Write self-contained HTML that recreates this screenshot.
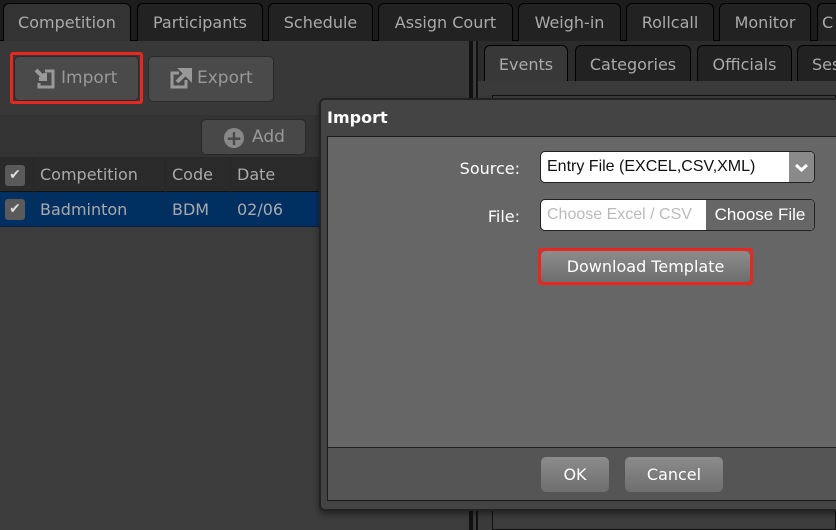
<!DOCTYPE html>
<html><head><style>
*{box-sizing:border-box;margin:0;padding:0}
body{width:836px;height:530px;overflow:hidden;background:#3c3c3c;font-family:"DejaVu Sans","Liberation Sans",sans-serif;position:relative}
.a{position:absolute}
.tab{position:absolute;top:3px;height:38px;border:1px solid #000;border-bottom:none;border-radius:6px 6px 0 0;background:#222;color:#aaa;font-size:16px;text-align:center;line-height:38px}
.stab{position:absolute;top:45px;height:36px;border:1px solid #000;border-bottom:none;border-radius:6px 6px 0 0;background:#222;color:#aaa;font-size:16px;text-align:center;line-height:38px}
.btn{position:absolute;border:1px solid #2a2a2a;border-radius:5px;background:#4a4a4a;color:#999;font-size:17px;line-height:43px}
.th{position:absolute;top:157px;height:35px;line-height:36px;color:#aaa;font-size:16px;padding-left:6px;border-right:1px dotted #222}
.td{position:absolute;top:192px;height:34px;line-height:36px;color:#aaa;font-size:16px;padding-left:6px;border-right:1px dotted #1a2a40}
.chk{position:absolute;left:5px;width:20px;height:21px;background:#5a5a5a;border-radius:3px;color:#ddd;font-size:14px;text-align:center;line-height:21px}
.dbtn{position:absolute;border-radius:5px;background:linear-gradient(#8c8c8c,#6e6e6e);color:#fff;font-size:16px;text-align:center}
.lbl{position:absolute;text-align:right;color:#fff;font-size:16px}
</style></head><body>
<div class="a" style="left:0;top:0;width:836px;height:41px;background:#1c1c1c;border-bottom:1px solid #000"></div>
<div class="tab" style="left:3px;width:128px;background:#333">Competition</div>
<div class="tab" style="left:137px;width:126px">Participants</div>
<div class="tab" style="left:268px;width:105px">Schedule</div>
<div class="tab" style="left:378px;width:135px">Assign Court</div>
<div class="tab" style="left:518px;width:103px">Weigh-in</div>
<div class="tab" style="left:626px;width:88px">Rollcall</div>
<div class="tab" style="left:719px;width:92px">Monitor</div>
<div class="tab" style="left:817px;width:40px;text-align:left;padding-left:4px">C</div>

<div class="a" style="left:0;top:41px;width:469px;height:74px;background:#383838"></div>
<div class="btn" style="left:14px;top:56px;width:125px;height:45px;padding-left:46px">Import</div>
<svg class="a" style="left:33px;top:67px" width="24" height="22" viewBox="0 0 24 22"><path d="M3 3 L12 12 M6 12 H12 V6" stroke="#999" stroke-width="4" fill="none"/><path d="M12 4 H20 V20 H6 V16" stroke="#999" stroke-width="3" fill="none"/></svg>
<div class="a" style="left:10px;top:52px;width:133px;height:52px;border:3px solid #e8281e;border-radius:3px"></div>
<div class="btn" style="left:148px;top:56px;width:126px;height:46px;padding-left:48px">Export</div>
<svg class="a" style="left:169px;top:67px" width="24" height="22" viewBox="0 0 24 22"><path d="M10 6 H3 V20 H17 V13" stroke="#999" stroke-width="3" fill="none"/><path d="M8 15 L18 5 M13 3 H21 V11 Z" stroke="#999" stroke-width="4" fill="#999"/></svg>
<div class="a" style="left:0;top:115px;width:469px;height:42px;background:#333"></div>
<div class="btn" style="left:201px;top:119px;width:105px;height:36px;line-height:35px;padding-left:50px;background:#484848">Add</div>
<div class="a" style="left:224px;top:128px;width:20px;height:20px;border-radius:50%;background:#888;color:#484848;font-weight:bold;font-size:20px;line-height:20px;text-align:center">+</div>
<div class="a" style="left:0;top:157px;width:469px;height:35px;background:#2a2a2a;border-bottom:1px solid #111"></div>
<div class="th" style="left:0;width:34px"></div><div class="chk" style="top:165px">✔</div>
<div class="th" style="left:34px;width:132px">Competition</div>
<div class="th" style="left:166px;width:65px">Code</div>
<div class="th" style="left:231px;width:100px;border:none">Date</div>
<div class="a" style="left:0;top:192px;width:469px;height:35px;background:#002f62;border-bottom:1px dotted #112"></div>
<div class="td" style="left:0;width:34px"></div><div class="chk" style="top:199px">✔</div>
<div class="td" style="left:34px;width:132px">Badminton</div>
<div class="td" style="left:166px;width:65px">BDM</div>
<div class="td" style="left:231px;width:100px;border:none">02/06</div>

<div class="a" style="left:469px;top:41px;width:4px;height:489px;background:#111"></div>
<div class="a" style="left:473px;top:41px;width:3px;height:489px;background:#3a3a3a"></div>
<div class="a" style="left:476px;top:41px;width:2px;height:489px;background:#111"></div>
<div class="a" style="left:478px;top:41px;width:358px;height:40px;background:#2b2b2b"></div>
<div class="a" style="left:478px;top:81px;width:358px;height:449px;background:#3a3a3a"></div>
<div class="a" style="left:492px;top:95px;width:344px;height:435px;border:1px solid #111;background:#3c3c3c"></div>
<div class="stab" style="left:484px;width:84px;background:#383838">Events</div>
<div class="stab" style="left:575px;width:116px">Categories</div>
<div class="stab" style="left:697px;width:95px">Officials</div>
<div class="stab" style="left:797px;width:60px;text-align:left;padding-left:14px">Ses</div>

<div class="a" style="left:319px;top:98px;width:530px;height:413px;background:#444;border:2px solid #222;border-radius:6px;box-shadow:0 3px 6px rgba(0,0,0,.4)"></div>
<div class="a" style="left:327px;top:108px;color:#fff;font-weight:bold;font-size:16px">Import</div>
<div class="a" style="left:327px;top:136px;width:520px;height:365px;border:1px solid #1c1c1c;background:#555"></div>
<div class="a" style="left:328px;top:137px;width:520px;height:311px;background:#666;border-bottom:1px solid #222"></div>
<div class="lbl" style="left:400px;top:159px;width:120px">Source:</div>
<div class="a" style="left:540px;top:151px;width:275px;height:32px;background:#fff;border:1px solid #222;border-radius:5px;overflow:hidden;font-family:'Liberation Sans',sans-serif;font-size:16px;line-height:30px;padding-left:6px;color:#111">Entry File (EXCEL,CSV,XML)
<div class="a" style="right:0;top:0;width:25px;height:30px;background:#8a8a8a"><svg width="25" height="30"><path d="M7 13 L12.5 18 L18 13" stroke="#fff" stroke-width="3" fill="none"/></svg></div></div>
<div class="lbl" style="left:400px;top:207px;width:120px">File:</div>
<div class="a" style="left:540px;top:199px;width:275px;height:32px;background:#fff;border:1px solid #222;border-radius:5px;overflow:hidden;font-family:'Liberation Sans',sans-serif;font-size:16px;line-height:30px;padding-left:6px;color:#bbb">Choose Excel / CSV
<div class="a" style="right:0;top:0;width:108px;height:30px;background:#666;color:#fff;text-align:center;font-size:17px">Choose File</div></div>
<div class="dbtn" style="left:541px;top:251px;width:209px;height:31px;line-height:31px">Download Template</div>
<div class="a" style="left:538px;top:248px;width:215px;height:37px;border:3px solid #e8281e;border-radius:3px"></div>
<div class="dbtn" style="left:541px;top:457px;width:68px;height:35px;line-height:36px">OK</div>
<div class="dbtn" style="left:625px;top:457px;width:98px;height:35px;line-height:36px">Cancel</div>
</body></html>
